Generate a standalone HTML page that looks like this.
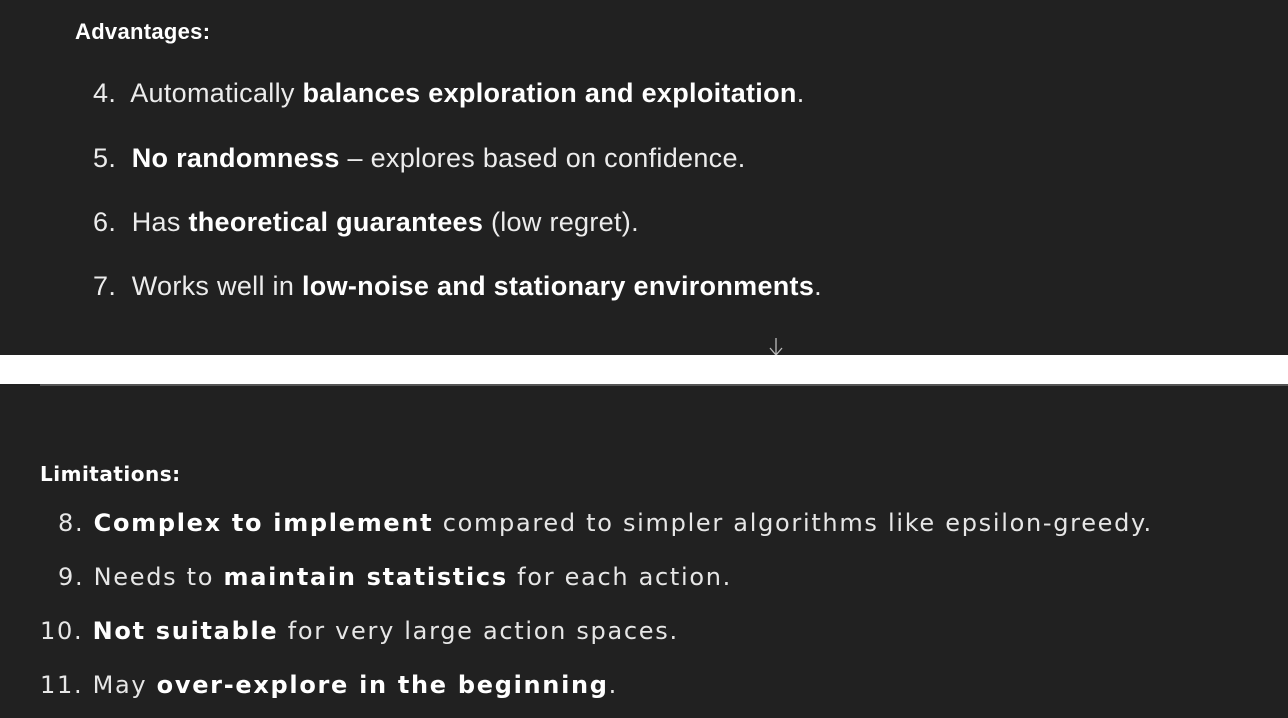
<!DOCTYPE html>
<html><head><meta charset="utf-8"><style>
body{margin:0;width:1288px;height:718px;background:#212121;position:relative;overflow:hidden;color:#ececec}
.t{position:absolute;white-space:nowrap;font-family:"Liberation Sans",sans-serif;font-size:27px;line-height:30px;letter-spacing:0.3px}
.b{position:absolute;white-space:nowrap;font-family:"DejaVu Sans",sans-serif;font-size:24px;line-height:30px;letter-spacing:1.7px;color:#e6e6e6}
b{font-weight:bold;color:#fff}
.band{position:absolute;left:0;top:355px;width:1288px;height:29px;background:#fff}
.line{position:absolute;left:40px;top:384px;width:1248px;height:2px;background:#555}
</style></head><body>
<div class="t" style="left:75px;top:17px;font-size:22px"><b>Advantages:</b></div>
<div class="t" style="left:93px;top:78px">4.&nbsp; Automatically <b>balances exploration and exploitation</b>.</div>
<div class="t" style="left:93px;top:143px">5.&nbsp; <b>No randomness</b> – explores based on confidence.</div>
<div class="t" style="left:93px;top:207px">6.&nbsp; Has <b>theoretical guarantees</b> (low regret).</div>
<div class="t" style="left:93px;top:271px">7.&nbsp; Works well in <b>low-noise and stationary environments</b>.</div>
<svg style="position:absolute;left:768px;top:338px" width="16" height="18"><path d="M8 0V17M2 10L8 17L14 10" stroke="#bbb" stroke-width="1.3" fill="none"/></svg>
<div class="band"></div><div class="line"></div>
<div class="b" style="left:40px;top:459px;font-size:20px;letter-spacing:0.5px"><b>Limitations:</b></div>
<div class="b" style="left:58px;top:508px">8.&nbsp;<b>Complex to implement</b> compared to simpler algorithms like epsilon-greedy.</div>
<div class="b" style="left:58px;top:562px">9.&nbsp;Needs to <b>maintain statistics</b> for each action.</div>
<div class="b" style="left:40px;top:616px">10.&nbsp;<b>Not suitable</b> for very large action spaces.</div>
<div class="b" style="left:40px;top:670px">11.&nbsp;May <b>over-explore in the beginning</b>.</div>
</body></html>
